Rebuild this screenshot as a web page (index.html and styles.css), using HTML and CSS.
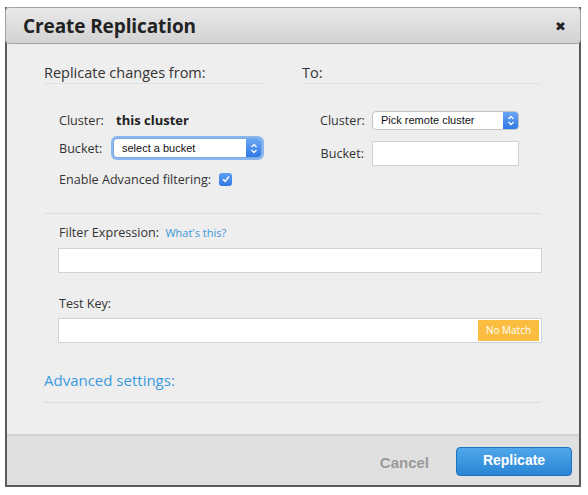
FILE: index.html
```html
<!DOCTYPE html>
<html>
<head>
<meta charset="utf-8">
<link rel="stylesheet" href="styles.css">
</head>
<body>
<div class="dialog">
  <div class="header">
    <h1 class="title">Create Replication</h1>
    <span class="close">&#x2716;</span>
  </div>
  <div class="body">
    <div class="cols">
      <div class="col">
        <div class="col-title">Replicate changes from:</div>
        <div class="rows left-rows">
          <div class="row"><span class="lbl">Cluster:</span><span class="val">this cluster</span></div>
          <div class="row"><span class="lbl">Bucket:</span>
            <div class="select focus"><span class="sel-text">select a bucket</span><span class="arrow"><svg width="8" height="11" viewBox="0 0 8 11"><path d="M1.5 4 L4 1.5 L6.5 4 M1.5 7 L4 9.5 L6.5 7" fill="none" stroke="#fff" stroke-width="1.3"/></svg></span></div>
          </div>
          <div class="row chk-row"><span class="lbl-wide">Enable Advanced filtering:</span><span class="checkbox"><svg width="10" height="10" viewBox="0 0 10 10"><path d="M2 5.2 L4.2 7.4 L8 2.6" fill="none" stroke="#fff" stroke-width="1.6"/></svg></span></div>
        </div>
      </div>
      <div class="col">
        <div class="col-title">To:</div>
        <div class="rows right-rows">
          <div class="row"><span class="rlbl">Cluster:</span>
            <div class="select plain"><span class="sel-text">Pick remote cluster</span><span class="arrow"><svg width="8" height="11" viewBox="0 0 8 11"><path d="M1.5 4 L4 1.5 L6.5 4 M1.5 7 L4 9.5 L6.5 7" fill="none" stroke="#fff" stroke-width="1.3"/></svg></span></div>
          </div>
          <div class="row"><span class="rlbl">Bucket:</span><div class="input small"></div></div>
        </div>
      </div>
    </div>
    <div class="filter">
      <div class="flabel">Filter Expression: <a class="link">What's this?</a></div>
      <div class="input wide"></div>
      <div class="flabel tk">Test Key:</div>
      <div class="input wide key"><span class="badge">No Match</span></div>
    </div>
    <div class="adv">Advanced settings:</div>
  </div>
  <div class="footer">
    <span class="cancel">Cancel</span>
    <span class="btn">Replicate</span>
  </div>
</div>
</body>
</html>
```

FILE: styles.css
```css
html, body {
  margin: 0;
  padding: 0;
  background: #ffffff;
}
body {
  padding: 7px 0 0 5px;
  font-family: "Open Sans", "DejaVu Sans", sans-serif;
  color: #333;
}
.dialog {
  width: 572px;
  height: 478px;
  border: 2px solid #5b5b5b;
  border-top: none;
  background: #eeeeee;
  display: flex;
  flex-direction: column;
}
.header {
  margin: 0 -2px;
  height: 35px;
  border: 1px solid #a3a3a3;
  border-radius: 4px;
  background: linear-gradient(#e9e9e9, #d2d2d2);
  display: flex;
  align-items: center;
  justify-content: space-between;
  padding: 0 14px 0 17px;
  flex: none;
}
.title {
  margin: 0;
  font-size: 19px;
  font-weight: 700;
  color: #222;
  letter-spacing: -0.1px;
}
.close {
  font-size: 13px;
  color: #222;
  margin-top: 1px;
}
.body {
  flex: 1;
  padding: 18px 38px 0 37px;
}
.cols {
  display: grid;
  grid-template-columns: 220px 239px;
  column-gap: 38px;
  height: 151px;
  border-bottom: 1px solid #dedede;
}
.col-title {
  font-size: 14.5px;
  color: #333;
  height: 21px;
  line-height: 21px;
  border-bottom: 1px solid #dfe1e4;
}
.rows {
  display: flex;
  flex-direction: column;
}
.left-rows {
  padding: 25px 0 0 15px;
}
.right-rows {
  padding: 25px 0 0 18px;
}
.row {
  display: flex;
  align-items: center;
  font-size: 12.6px;
  height: 28px;
}
.left-rows .row:nth-child(1) { height: 22px; }
.left-rows .row:nth-child(2) { height: 34px; }
.left-rows .chk-row { height: 28px; }
.right-rows .row:nth-child(1) { height: 22px; margin-bottom: 10px; }
.right-rows .row:nth-child(2) { height: 25px; }
.lbl {
  width: 53px;
}
.val {
  font-weight: 700;
  font-size: 13px;
  padding-left: 4px;
  color: #222;
}
.lbl-wide {
  margin-right: 8px;
}
.rlbl {
  width: 44px;
  text-align: right;
  margin-right: 8px;
}
.select {
  position: relative;
  display: flex;
  align-items: center;
  background: #fff;
  border-radius: 4px;
  font-family: "Liberation Sans", Arial, sans-serif;
  font-size: 11px;
  color: #111;
  box-sizing: border-box;
}
.select.focus {
  width: 149px;
  height: 20px;
  border: 1px solid #7aa7e0;
  box-shadow: 0 0 0 2px #8ab8ee;
  margin-left: 1px;
}
.select.plain {
  width: 147px;
  height: 19px;
  border: 1px solid #c3c3c3;
}
.sel-text {
  padding-left: 8px;
  flex: 1;
}
.arrow {
  width: 15px;
  align-self: stretch;
  background: linear-gradient(#6aa6f5, #2f7ae6);
  border-radius: 0 3px 3px 0;
  display: flex;
  align-items: center;
  justify-content: center;
}
.input {
  background: #fff;
  border: 1px solid #cfd2d6;
  box-sizing: border-box;
}
.input.small {
  width: 147px;
  height: 25px;
}
.checkbox {
  width: 13px;
  height: 13px;
  border-radius: 3px;
  background: linear-gradient(#5d9ff2, #2f79e4);
  display: flex;
  align-items: center;
  justify-content: center;
}
.filter {
  padding: 8px 0 0 14px;
}
.flabel {
  font-size: 12.6px;
  height: 21px;
  line-height: 21px;
  margin-bottom: 5px;
  padding-left: 1px;
}
.flabel.tk {
  margin-top: 20px;
  margin-bottom: 4px;
}
.link {
  color: #3a96d8;
  font-size: 11px;
  margin-left: 3px;
}
.input.wide {
  width: 484px;
  height: 25px;
}
.input.key {
  display: flex;
  justify-content: flex-end;
  align-items: center;
  padding-right: 2px;
}
.badge {
  background: #fbbd40;
  color: #fff;
  font-size: 10px;
  width: 61px;
  height: 21px;
  line-height: 21px;
  text-align: center;
}
.adv {
  margin-top: 27px;
  color: #3a9be0;
  font-size: 15px;
  height: 21px;
  line-height: 21px;
  padding-bottom: 11px;
  border-bottom: 1px solid #dcdcdc;
}
.footer {
  flex: none;
  height: 49px;
  border-top: 2px solid #cfd0d0;
  background: #dfe0df;
  display: flex;
  align-items: center;
  justify-content: flex-end;
  padding-right: 7px;
}
.cancel {
  font-family: "Liberation Sans", Arial, sans-serif;
  font-weight: 700;
  font-size: 15px;
  color: #9a9a9a;
  margin-right: 27px;
  margin-top: 4px;
}
.btn {
  width: 114px;
  height: 27px;
  border: 1px solid #1f74c0;
  border-radius: 4px;
  background: linear-gradient(#4fa7ea, #2a86d6);
  color: #fff;
  font-family: "Liberation Sans", Arial, sans-serif;
  font-weight: 700;
  font-size: 14px;
  text-align: center;
  line-height: 24px;
  margin-top: 2px;
}
```
